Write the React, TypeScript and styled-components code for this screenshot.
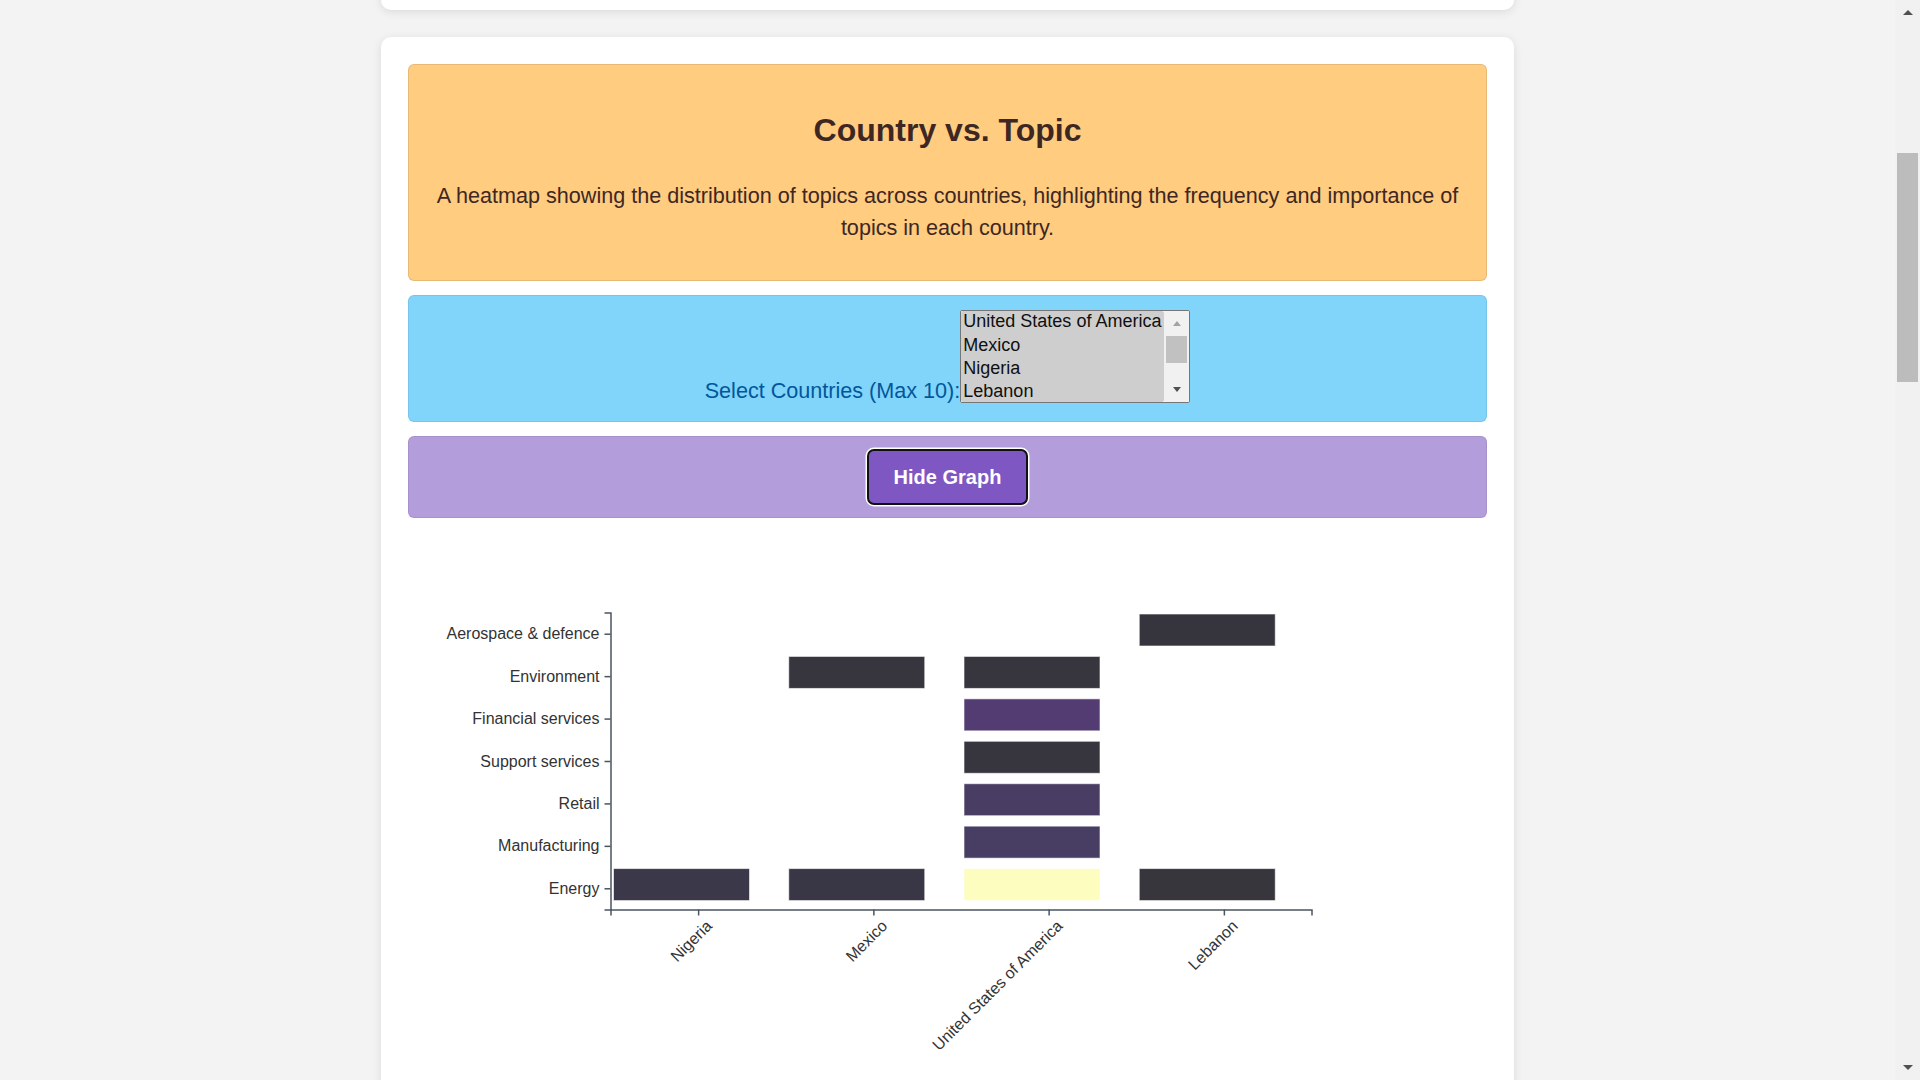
import React, { useLayoutEffect, useRef, useState } from "react";
import styled, { createGlobalStyle, css } from "styled-components";

const GlobalStyle = createGlobalStyle`
  html, body {
    margin: 0;
    padding: 0;
    height: 100%;
    overflow: hidden;
  }
  body {
    font-family: "Liberation Sans", Arial, Helvetica, sans-serif;
    line-height: 1.5;
    background: #f3f3f3;
    color: #333;
  }
  #root {
    height: 100%;
  }
`;

/* ---------- classic scrollbar drawing (browser chrome) ---------- */

const Rail = styled.div`
  width: 25px;
  flex-shrink: 0;
  display: flex;
  flex-direction: column;
  background: #f1f1f1;
`;

const RailButton = styled.div`
  height: 25px;
  flex-shrink: 0;
  display: flex;
  align-items: center;
  justify-content: center;
`;

const Arrow = styled.span<{ $dir: "up" | "down"; $color: string; $half: number }>`
  width: 0;
  height: 0;
  border-left: ${(p) => p.$half}px solid transparent;
  border-right: ${(p) => p.$half}px solid transparent;
  ${(p) =>
    p.$dir === "up"
      ? css`
          border-bottom: 5px solid ${p.$color};
        `
      : css`
          border-top: 5px solid ${p.$color};
        `}
`;

const Track = styled.div`
  flex: 1;
  padding: 0 2px;
  overflow: hidden;
`;

const Thumb = styled.div<{ $color: string }>`
  background: ${(p) => p.$color};
`;

type RailProps = {
  length: number;
  content: number;
  view: number;
  offset: number;
  thumbColor: string;
  upColor: string;
  downColor: string;
  half: number;
};

function ScrollRail({ length, content, view, offset, thumbColor, upColor, downColor, half }: RailProps) {
  const track = length - 50;
  const thumbLen = Math.max(18, (track * view) / content);
  const thumbTop = (track * offset) / content;
  return (
    <Rail aria-hidden="true">
      <RailButton>
        <Arrow $dir="up" $color={upColor} $half={half} />
      </RailButton>
      <Track>
        <Thumb $color={thumbColor} style={{ marginTop: thumbTop, height: thumbLen }} />
      </Track>
      <RailButton>
        <Arrow $dir="down" $color={downColor} $half={half} />
      </RailButton>
    </Rail>
  );
}

/* ---------- page ---------- */

const Frame = styled.div`
  display: flex;
  height: 100vh;
`;

const Viewport = styled.div`
  flex: 1;
  overflow: hidden;
  background: #f3f3f3;
`;

const Main = styled.main`
  width: 1133px;
  margin: 0 auto;
  padding: 27px 0;
  display: flex;
  flex-direction: column;
  gap: 27px;
`;

const Card = styled.section<{ $minHeight?: number }>`
  background: #ffffff;
  border-radius: 10px;
  box-shadow: 0 2px 10px rgba(0, 0, 0, 0.1);
  padding: 27px;
  box-sizing: border-box;
  min-height: ${(p) => (p.$minHeight ? `${p.$minHeight}px` : "auto")};
  display: flex;
  flex-direction: column;
  gap: 14px;
`;

const HeaderPanel = styled.div`
  background: #ffcc80;
  border: 1px solid rgba(0, 0, 0, 0.09);
  border-radius: 6px;
  padding: 16px;
  text-align: center;
  color: #3e2723;
`;

const Title = styled.h2`
  margin: 25px 0 25.5px;
  font-size: 32px;
  line-height: 1.5;
  font-weight: 700;
`;

const Description = styled.p`
  margin: 0 0 20px;
  font-size: 21.6px;
  line-height: 1.5;
`;

const FilterPanel = styled.div`
  background: #81d4fa;
  border: 1px solid rgba(0, 0, 0, 0.07);
  border-radius: 6px;
  padding: 14px 16px 18px;
  display: flex;
  justify-content: center;
  align-items: flex-end;
`;

const FilterLabel = styled.label`
  color: #01579b;
  font-size: 21.6px;
  line-height: 24px;
`;

const ListBox = styled.div`
  width: 230px;
  height: 93px;
  box-sizing: border-box;
  border: 1px solid #767676;
  border-radius: 2px;
  background: #ffffff;
  display: flex;
  overflow: hidden;
`;

const CountrySelect = styled.select`
  flex: 1;
  min-width: 0;
  height: 91px;
  margin: 0;
  padding: 0;
  border: none;
  background: #ffffff;
  color: #101010;
  font-family: "Liberation Sans", Arial, Helvetica, sans-serif;
  font-size: 18px;
  outline: none;
  overflow: hidden;

  option {
    min-height: 0;
    min-block-size: 0;
    padding: 0 2px 2.3px;
  }
`;

const ActionPanel = styled.div`
  background: #b39ddb;
  border: 1px solid rgba(0, 0, 0, 0.07);
  border-radius: 6px;
  padding: 12px;
  display: flex;
  justify-content: center;
`;

const ToggleButton = styled.button`
  background: #7e57c2;
  color: #ffffff;
  font-family: "Liberation Sans", Arial, Helvetica, sans-serif;
  font-size: 20px;
  font-weight: 700;
  line-height: 32px;
  padding: 10px 24.5px;
  border: 2px solid #111111;
  border-radius: 7px;
  box-shadow: 0 0 0 1.5px #ffffff;
  cursor: pointer;
`;

const ChartSvg = styled.svg`
  display: block;
  flex-shrink: 0;
  font-family: "Liberation Sans", Arial, Helvetica, sans-serif;
  font-size: 16px;
`;

const countries = ["Nigeria", "Mexico", "United States of America", "Lebanon"];
const topics = [
  "Aerospace & defence",
  "Environment",
  "Financial services",
  "Support services",
  "Retail",
  "Manufacturing",
  "Energy",
];

const cells: { c: number; t: number; color: string }[] = [
  { c: 3, t: 0, color: "#36353d" },
  { c: 1, t: 1, color: "#37363e" },
  { c: 2, t: 1, color: "#37363e" },
  { c: 2, t: 2, color: "#533c72" },
  { c: 2, t: 3, color: "#37363e" },
  { c: 2, t: 4, color: "#493d64" },
  { c: 2, t: 5, color: "#483d63" },
  { c: 0, t: 6, color: "#3a3849" },
  { c: 1, t: 6, color: "#393746" },
  { c: 2, t: 6, color: "#fcfdbf" },
  { c: 3, t: 6, color: "#37363c" },
];

const selectOptions = [
  "United States of America",
  "Mexico",
  "Nigeria",
  "Lebanon",
  "India",
  "Canada",
];
const selected = ["United States of America", "Mexico", "Nigeria", "Lebanon"];

const W = 701;
const H = 297;
const stepX = W / countries.length;
const stepY = H / topics.length;
const AXIS = "#4a5560";

function Heatmap() {
  return (
    <ChartSvg width={1079} height={640}>
      <g transform="translate(202.5, 80.5)">
        {cells.map((d, i) => (
          <rect
            key={i}
            x={d.c * stepX + 3}
            y={d.t * stepY + 1.5}
            width={136}
            height={32}
            fill={d.color}
            stroke="#ffffff"
            strokeOpacity={0.6}
            strokeWidth={1}
          />
        ))}
        <g fill="none">
          <path d={`M-6,0.5H0.5V${H + 0.5}H-6`} stroke={AXIS} strokeWidth={1.5} />
          {topics.map((t, j) => (
            <g key={t} transform={`translate(0, ${j * stepY + stepY / 2 + 0.5})`}>
              <line x2={-6} stroke={AXIS} strokeWidth={1.5} />
              <text x={-11} dy="0.32em" fill="#333" textAnchor="end">
                {t}
              </text>
            </g>
          ))}
        </g>
        <g transform={`translate(0, ${H})`} fill="none">
          <path d={`M0.5,6V0.5H${W + 0.5}V6`} stroke={AXIS} strokeWidth={1.5} />
          {countries.map((c, i) => (
            <g key={c} transform={`translate(${i * stepX + stepX / 2 + 0.5}, 0)`}>
              <line y2={6} stroke={AXIS} strokeWidth={1.5} />
              <text
                y={9}
                dy="0.71em"
                fill="#333"
                textAnchor="end"
                transform="translate(0, 3) rotate(-45)"
              >
                {c}
              </text>
            </g>
          ))}
        </g>
      </g>
    </ChartSvg>
  );
}

type ScrollState = { top: number; height: number; view: number };

export default function App() {
  const viewportRef = useRef<HTMLDivElement>(null);
  const selectRef = useRef<HTMLSelectElement>(null);
  const [page, setPage] = useState<ScrollState>({ top: 604, height: 4857, view: 1080 });
  const [list, setList] = useState<ScrollState>({ top: 0, height: 138, view: 91 });

  useLayoutEffect(() => {
    const v = viewportRef.current;
    if (v) {
      v.scrollTop = 604;
      setPage({ top: v.scrollTop, height: v.scrollHeight, view: v.clientHeight });
    }
    const s = selectRef.current;
    if (s) {
      s.scrollTop = 0;
      setList({ top: s.scrollTop, height: Math.max(s.scrollHeight, 91), view: s.clientHeight || 91 });
    }
  }, []);

  return (
    <>
      <GlobalStyle />
      <Frame>
        <Viewport ref={viewportRef}>
          <Main>
            <Card $minHeight={587} />
            <Card>
              <HeaderPanel>
                <Title>Country vs. Topic</Title>
                <Description>
                  A heatmap showing the distribution of topics across countries, highlighting the
                  frequency and importance of topics in each country.
                </Description>
              </HeaderPanel>
              <FilterPanel>
                <FilterLabel htmlFor="country-select">Select Countries (Max 10):</FilterLabel>
                <ListBox>
                  <CountrySelect
                    id="country-select"
                    ref={selectRef}
                    multiple
                    defaultValue={selected}
                  >
                    {selectOptions.map((o) => (
                      <option key={o} value={o}>
                        {o}
                      </option>
                    ))}
                  </CountrySelect>
                  <ScrollRail
                    length={91}
                    content={list.height}
                    view={list.view}
                    offset={list.top}
                    thumbColor="#c1c1c1"
                    upColor="#a3a3a3"
                    downColor="#505050"
                    half={4.5}
                  />
                </ListBox>
              </FilterPanel>
              <ActionPanel>
                <ToggleButton type="button">Hide Graph</ToggleButton>
              </ActionPanel>
              <Heatmap />
            </Card>
            <Card $minHeight={1486} />
            <Card $minHeight={1487} />
          </Main>
        </Viewport>
        <ScrollRail
          length={page.view}
          content={page.height}
          view={page.view}
          offset={page.top}
          thumbColor="#bcbcbc"
          upColor="#505050"
          downColor="#505050"
          half={5.5}
        />
      </Frame>
    </>
  );
}
